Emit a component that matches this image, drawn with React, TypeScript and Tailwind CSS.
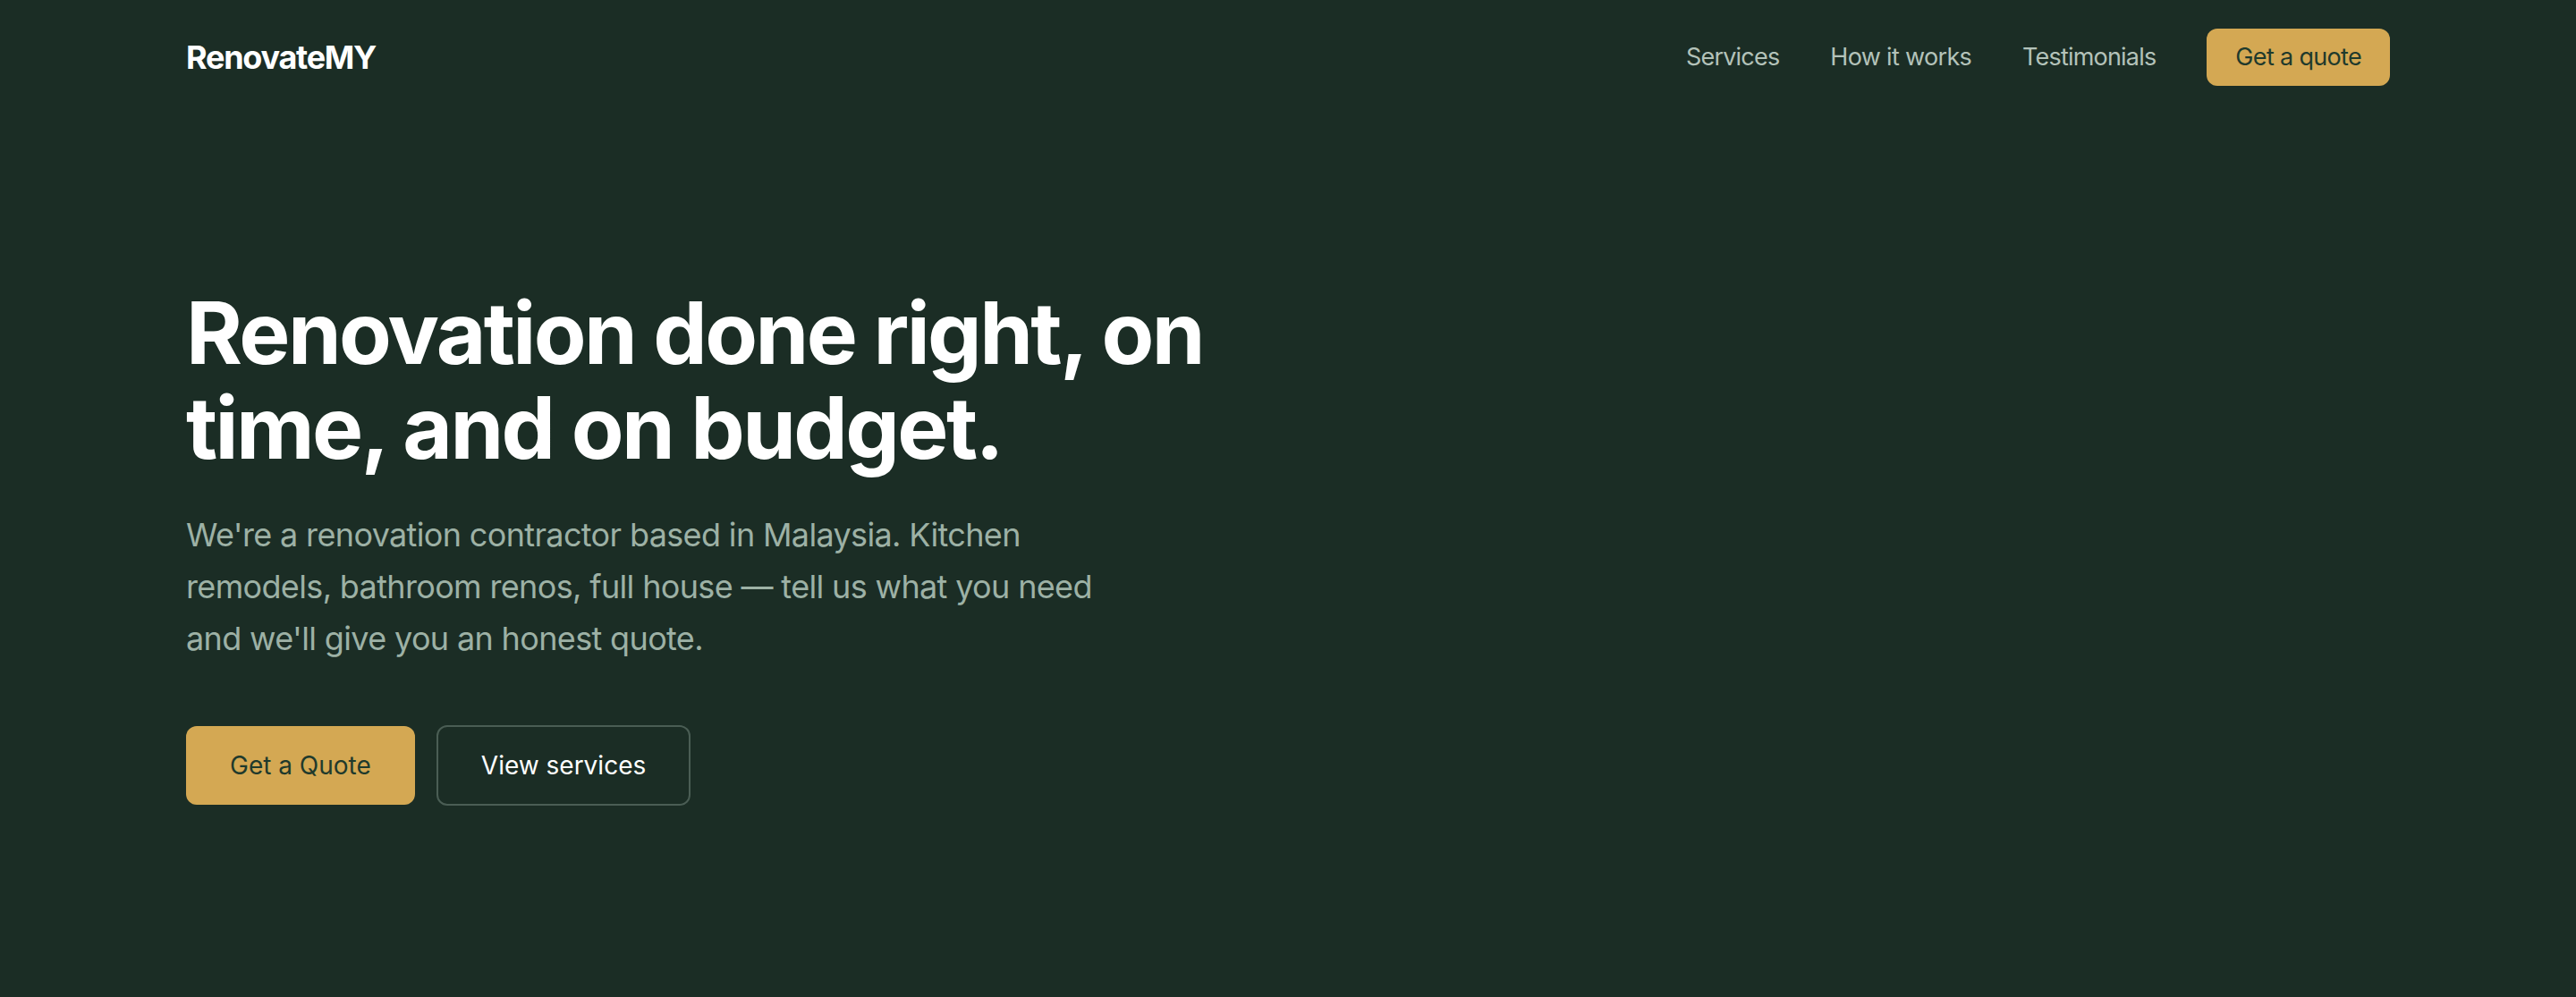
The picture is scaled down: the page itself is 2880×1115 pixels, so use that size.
import React from "react";

export default function App() {
  return (
    <div className="min-h-screen w-full bg-[#1b2d25] font-['Inter','Liberation_Sans',sans-serif] antialiased">
      <header className="mx-auto flex h-[128px] max-w-[2560px] items-center justify-between px-12">
        <div className="text-[36px] font-bold tracking-[-0.035em] text-white">RenovateMY</div>
        <nav className="flex items-center gap-[57px]">
          <a className="text-[27px] leading-[40px] tracking-[-0.03em] text-[#b3c2b9]">Services</a>
          <a className="text-[27px] leading-[40px] tracking-[-0.025em] text-[#b3c2b9]">How it works</a>
          <a className="text-[27px] leading-[40px] tracking-[-0.03em] text-[#b3c2b9]">Testimonials</a>
          <a className="rounded-[12px] bg-[#d4a853] px-8 py-3 text-[27px] leading-[40px] tracking-[-0.025em] text-[#1f3a2c]">
            Get a quote
          </a>
        </nav>
      </header>

      <main className="mx-auto max-w-[2560px] px-12 pt-[192px]">
        <h1 className="text-[96px] font-bold leading-[1.1] tracking-[-0.027em] text-white">
          Renovation done right, on
          <br />
          time, and on budget.
        </h1>
        <p className="mt-[38px] max-w-[1100px] text-[36px] leading-[58px] tracking-[-0.018em] text-[#9db1a5]">
          We're a renovation contractor based in Malaysia. Kitchen
          <br />
          remodels, bathroom renos, full house — tell us what you need
          <br />
          and we'll give you an honest quote.
        </p>
        <div className="mt-[68px] flex items-center gap-6">
          <a className="rounded-[12px] bg-[#d4a853] px-[49px] py-6 text-[28px] leading-[40px] text-[#1f3a2c]">
            Get a Quote
          </a>
          <a className="rounded-[12px] border-2 border-[#4a5d54] px-12 py-[23px] text-[28px] leading-[40px] text-white">
            View services
          </a>
        </div>
      </main>
    </div>
  );
}
